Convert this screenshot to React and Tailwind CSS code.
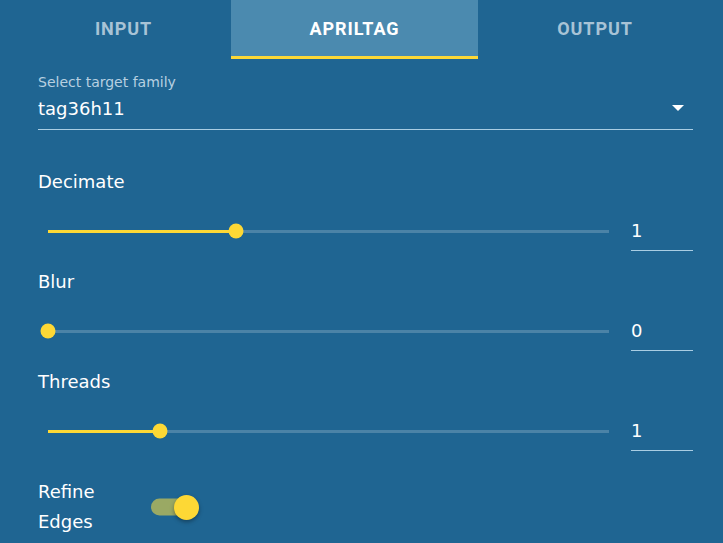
import React, { useState } from 'react';

const tabs = ['INPUT', 'APRILTAG', 'OUTPUT'];
const tabWidths = ['w-[231px] pl-[16px]', 'w-[247px]', 'w-[234px]'];

function SliderRow({ label, value, pct, first }) {
  return (
    <div className={first ? 'mt-[40px]' : 'mt-[19px]'}>
      <div className="h-[24px] leading-[24px] text-[18px] text-white">{label}</div>
      <div className="mt-[17px] flex h-[40px] items-center">
        <div className="relative flex-1 px-[10px]">
          <div className="relative h-[3px] bg-white/20">
            <div className="absolute left-0 top-0 h-[3px] bg-[#fdd835]" style={{ width: `${pct}%` }} />
            <div
              className="absolute top-1/2 h-[15px] w-[15px] -translate-x-1/2 -translate-y-1/2 rounded-full bg-[#fdd835]"
              style={{ left: `${pct}%` }}
            />
          </div>
        </div>
        <div className="ml-[12px] flex h-[40px] w-[62px] items-center border-b border-[#a9cde3] text-[18px] text-white">
          {value}
        </div>
      </div>
    </div>
  );
}

export default function App() {
  const [active, setActive] = useState(1);
  const [refine, setRefine] = useState(true);

  return (
    <div className="h-[543px] w-full overflow-hidden bg-[#1f6592] font-['DejaVu_Sans',sans-serif]">
      {/* tabs */}
      <div className="flex h-[59px]">
        {tabs.map((t, i) => (
          <button
            key={t}
            onClick={() => setActive(i)}
            className={`${tabWidths[i]} flex items-center justify-center font-['Roboto',sans-serif] text-[18px] font-bold tracking-[0.05em] ${
              active === i
                ? 'border-b-[3px] border-[#fdd835] bg-[#4b8aaf] text-white'
                : 'pb-[2px] text-[#a8c3d6]'
            }`}
          >
            {t}
          </button>
        ))}
      </div>

      <div className="pl-[38px] pr-[30px]">
        {/* select */}
        <div className="mt-[14px]">
          <div className="h-[18px] leading-[18px] text-[14px] text-[#b7d0e1]">Select target family</div>
          <div className="flex h-[39px] items-center justify-between border-b border-[#a9cde3] pb-[4px]">
            <span className="text-[18px] text-white">tag36h11</span>
            <svg width="14" height="8" viewBox="0 0 14 8" className="mr-[8px]">
              <path d="M1 1 L13 1 L7 7 Z" fill="white" />
            </svg>
          </div>
        </div>

        <SliderRow label="Decimate" value="1" pct={33.5} first />
        <SliderRow label="Blur" value="0" pct={0} />
        <SliderRow label="Threads" value="1" pct={20} />

        {/* refine edges */}
        <div className="mt-[26px] flex items-center">
          <div className="w-[113px] text-[18px] leading-[30px] text-white">
            Refine
            <br />
            Edges
          </div>
          <button onClick={() => setRefine(!refine)} className="relative h-[25px] w-[50px]">
            <span
              className={`absolute left-0 top-1/2 h-[17px] w-[36px] -translate-y-1/2 rounded-full ${
                refine ? 'bg-[#9aa964]' : 'bg-white/30'
              }`}
            />
            <span
              className={`absolute top-0 h-[25px] w-[25px] rounded-full shadow-[0_2px_4px_rgba(0,0,0,0.35)] ${
                refine ? 'left-[23px] bg-[#fdd835]' : 'left-0 bg-white'
              }`}
            />
          </button>
        </div>
      </div>
    </div>
  );
}
